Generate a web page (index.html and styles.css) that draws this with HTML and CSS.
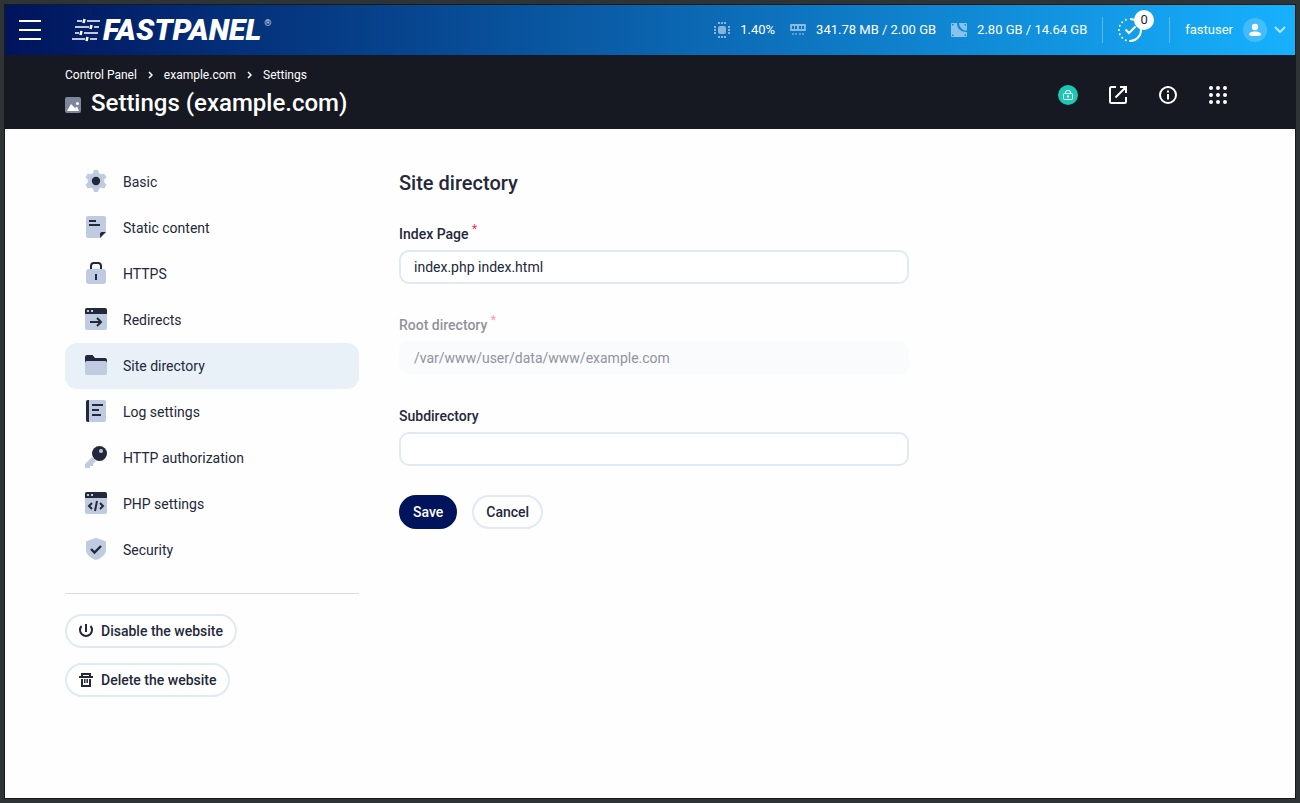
FILE: index.html
```html
<!DOCTYPE html>
<html lang="en">
<head>
<meta charset="utf-8">
<meta name="viewport" content="width=device-width, initial-scale=1">
<title>Settings (example.com)</title>
<link rel="stylesheet" href="styles.css">
</head>
<body>
<div class="window">
  <header class="topbar">
    <button class="icon-button burger" aria-label="Menu">
      <svg width="24" height="20" viewBox="0 0 24 20" stroke="#fff" stroke-width="2"><path d="M1 1h22M1 10h22M1 19h22"/></svg>
    </button>
    <a class="logo" href="#">
      <svg width="29" height="24" viewBox="0 0 29 24" fill="none" stroke="#fff">
        <path stroke-width="1.700" d="M5 3h5M15 3h13M3 9h14M22 9h5M3 15h4M12 15h14M0 21h13M18 21h7"/>
        <path stroke-width="2.600" d="M12.500 1l-1 4M19.500 7l-1 4M9.500 13l-1 4M15.500 19l-1 4"/>
      </svg>
      <span class="logo-name">FASTPANEL</span>
      <span class="logo-mark">®</span>
    </a>
    <div class="stats">
      <span class="stat">
        <svg width="16" height="16" viewBox="0 0 16 16" fill="#fff"><rect x="4" y="4" width="8" height="8" rx="2"/><path d="M4 0h2v2H4zM7 0h2v2H7zM10 0h2v2h-2zM4 14h2v2H4zM7 14h2v2H7zM10 14h2v2h-2zM0 4h2v2H0zM0 7h2v2H0zM0 10h2v2H0zM14 4h2v2h-2zM14 7h2v2h-2zM14 10h2v2h-2z"/></svg>
        1.40%
      </span>
      <span class="stat">
        <svg width="16" height="16" viewBox="0 0 16 16" fill="#fff"><path fill-rule="evenodd" d="M1 2h14q1 0 1 1v2q-1 1 0 2v1q0 1-1 1H1Q0 9 0 8V7q1-1 0-2V3q0-1 1-1zM2 4v3h2V4zM5 4v3h2V4zM9 4v3h2V4zM12 4v3h2V4z"/><path opacity=".6" d="M2 11h2v2H2zM5 11h2v2H5zM9 11h2v2H9zM12 11h2v2h-2z"/></svg>
        341.78 MB / 2.00 GB
      </span>
      <span class="stat">
        <svg width="16" height="16" viewBox="0 0 16 16" fill="#fff"><path fill-rule="evenodd" d="M1 1h5c0 6 4 9 10 9V14q0 1-1 1H1q-1 0-1-1V2q0-1 1-1zM1 2v1.500h1.500V2zM1 12.500V14h1.500v-1.500zM13.500 12.500V14H15v-1.500z"/><path fill-rule="evenodd" d="M8 1h7q1 0 1 1v6.500c-3 0-4-.5-5.500-2C9 5 8 3 8 1zM13.500 2v1.500H15V2z"/></svg>
        2.80 GB / 14.64 GB
      </span>
    </div>
    <button class="icon-button tasks" aria-label="Tasks">
      <svg width="26" height="26" viewBox="0 0 26 26" fill="none" stroke="#fff" stroke-width="2"><path d="M13 2a11 11 0 0 1 0 22"/><path stroke-dasharray="0 4.300" stroke-linecap="round" d="M13 24a11 11 0 0 1 0-22"/><path d="M8.500 12.500l3.500 3.500 6.500-6.500"/></svg>
      <span class="badge">0</span>
    </button>
    <button class="user">
      fastuser
      <svg width="24" height="24" viewBox="0 0 24 24"><circle cx="12" cy="12" r="12" fill="#fff" opacity=".2"/><circle cx="12" cy="9" r="3.200" fill="#fff"/><path fill="#fff" d="M6 16.500c0-2 2.500-3 6-3s6 1 6 3c0 1-2.500 1.500-6 1.500s-6-.5-6-1.500z"/></svg>
      <svg width="12" height="8" viewBox="0 0 12 8" fill="none" stroke="#b5e5ff" stroke-width="2"><path d="M1 1l5 5 5-5"/></svg>
    </button>
  </header>

  <div class="pagebar">
    <div class="page-title">
      <nav class="crumbs" aria-label="Breadcrumb">
        <a href="#">Control Panel</a>
        <svg width="5" height="8" viewBox="0 0 5 8" fill="none" stroke="#fff" stroke-width="1.500"><path d="M1 1l3 3-3 3"/></svg>
        <a href="#">example.com</a>
        <svg width="5" height="8" viewBox="0 0 5 8" fill="none" stroke="#fff" stroke-width="1.500"><path d="M1 1l3 3-3 3"/></svg>
        <span>Settings</span>
      </nav>
      <h1>
        <svg width="16" height="16" viewBox="0 0 16 16"><rect width="16" height="16" rx="2" fill="#7d8799"/><path fill="#fff" d="M2 14l4-7 4 4 2-1.500 2 4.500z"/><circle cx="12.500" cy="6.500" r="1.500" fill="#fff"/></svg>
        Settings (example.com)
      </h1>
    </div>
    <div class="actions">
      <button class="icon-button" aria-label="Secure">
        <svg width="20" height="20" viewBox="0 0 20 20" fill="none" stroke="#fff"><circle cx="10" cy="10" r="10" fill="#1cc7b4" stroke="none"/><rect x="5.500" y="8.500" width="9" height="6" rx="1"/><path d="M7.500 8.500V7q0-1.500 2.500-1.500t2.500 1.500v1.500"/><path d="M9 11.500h2" stroke-width="2"/></svg>
      </button>
      <button class="icon-button" aria-label="Open site">
        <svg width="20" height="20" viewBox="0 0 20 20" fill="none" stroke="#fff" stroke-width="2"><path d="M8 2H3.500Q2 2 2 3.500v13Q2 18 3.500 18h13q1.500 0 1.500-1.500V12M7.500 12.500L18 2M12 2h6v6"/></svg>
      </button>
      <button class="icon-button" aria-label="Information">
        <svg width="20" height="20" viewBox="0 0 20 20" fill="none" stroke="#fff" stroke-width="2"><circle cx="10" cy="10" r="8"/><path d="M10 9v5.500M10 5.500v2"/></svg>
      </button>
      <button class="icon-button" aria-label="Applications">
        <svg width="20" height="20" viewBox="0 0 20 20" fill="none" stroke="#fff" stroke-width="4" stroke-linecap="round"><path d="M3 3h0M10 3h0M17 3h0M3 10h0M10 10h0M17 10h0M3 17h0M10 17h0M17 17h0"/></svg>
      </button>
    </div>
  </div>

  <div class="content">
    <aside class="sidebar">
      <nav class="menu" aria-label="Site settings">
        <a href="#">
          <svg width="24" height="24" viewBox="0 0 24 24"><path fill="#becbe0" d="M10 1h4l1 3.200 2 1.100 3.200-.8 2.300 3.800-2.300 2.500v2.400l2.300 2.500-2.300 3.800-3.200-.8-2 1.100L14 23h-4l-1-3.200-2-1.100-3.200.8-2.300-3.800 2.300-2.500v-2.400L1.500 8.300l2.300-3.800 3.200.8 2-1.100z"/><circle cx="12" cy="12" r="4.200" fill="#23283a"/></svg>
          Basic
        </a>
        <a href="#">
          <svg width="24" height="24" viewBox="0 0 24 24"><path fill="#becbe0" d="M4 1h16q2 0 2 2v14l-6 6H4q-2 0-2-2V3q0-2 2-2z"/><path fill="#23283a" d="M22 17h-4q-2 0-2 2v4z"/><path stroke="#23283a" stroke-width="2" d="M5 6h7M5 10h11"/></svg>
          Static content
        </a>
        <a href="#">
          <svg width="24" height="24" viewBox="0 0 24 24"><path fill="none" stroke="#23283a" stroke-width="2" d="M7 9V5q0-3 3-3h4q3 0 3 3v4"/><rect x="2" y="8" width="20" height="15" rx="3" fill="#becbe0"/><path stroke="#23283a" stroke-width="2" d="M12 13v6"/></svg>
          HTTPS
        </a>
        <a href="#">
          <svg width="24" height="24" viewBox="0 0 24 24"><rect x="1" y="1" width="22" height="22" rx="2" fill="#becbe0"/><path fill="#23283a" d="M3 1h18q2 0 2 2v4H1V3q0-2 2-2z"/><path fill="#becbe0" d="M3 3h2v2H3zM7 3h2v2H7z"/><path fill="none" stroke="#23283a" stroke-width="2" d="M6 15h11M13 11l4 4-4 4"/></svg>
          Redirects
        </a>
        <a href="#" class="current" aria-current="page">
          <svg width="24" height="24" viewBox="0 0 24 24"><path fill="#23283a" d="M3 2h5.500L11 5h10q2 0 2 2v4H1V4q0-2 2-2z"/><rect x="1" y="8" width="22" height="14" rx="2" fill="#becbe0"/></svg>
          Site directory
        </a>
        <a href="#">
          <svg width="24" height="24" viewBox="0 0 24 24"><rect x="2" y="1" width="20" height="22" rx="2" fill="#becbe0"/><path fill="#23283a" d="M4 1h1v22H4q-2 0-2-2V3q0-2 2-2z"/><path stroke="#23283a" stroke-width="2" d="M8 6h11M8 11h7M8 16h9"/></svg>
          Log settings
        </a>
        <a href="#">
          <svg width="24" height="24" viewBox="0 0 24 24"><path fill="#becbe0" d="M8 12l4 4-3 3v2H6v2H1v-4z"/><circle cx="15.500" cy="8.500" r="7.500" fill="#23283a"/><circle cx="17" cy="6" r="2" fill="#becbe0"/></svg>
          HTTP authorization
        </a>
        <a href="#">
          <svg width="24" height="24" viewBox="0 0 24 24"><rect x="1" y="1" width="22" height="22" rx="2" fill="#becbe0"/><path fill="#23283a" d="M3 1h18q2 0 2 2v4H1V3q0-2 2-2z"/><path fill="#becbe0" d="M3 3h2v2H3zM7 3h2v2H7z"/><path fill="none" stroke="#23283a" stroke-width="2" d="M8 12l-3 3 3 3M16 12l3 3-3 3M13 10l-2 10"/></svg>
          PHP settings
        </a>
        <a href="#">
          <svg width="24" height="24" viewBox="0 0 24 24"><path fill="#becbe0" d="M12 1l9 3q1 .4 1 1.500V13c0 4-4 8-10 10C6 21 2 17 2 13V5.500Q2 4.400 3 4z"/><path fill="none" stroke="#23283a" stroke-width="2.400" d="M7 12l3.500 3.500L17 9"/></svg>
          Security
        </a>
      </nav>
      <div class="site-actions">
        <button class="button">
          <svg width="16" height="16" viewBox="0 0 16 16" fill="none" stroke="#23283a" stroke-width="2"><path d="M8 1v8M3.500 3a6 6 0 1 0 9 0"/></svg>
          Disable the website
        </button>
        <button class="button">
          <svg width="16" height="16" viewBox="0 0 16 16" fill="none" stroke="#23283a"><path stroke-width="2" d="M1 5h14M4 5V2h8v3M4 7v7h8V7"/><path stroke-width="1.500" d="M6.800 7v4M9.200 7v4"/></svg>
          Delete the website
        </button>
      </div>
    </aside>

    <form class="settings">
      <h2>Site directory</h2>
      <div class="field">
        <label for="index-page">Index Page <sup>*</sup></label>
        <input id="index-page" type="text" value="index.php index.html">
      </div>
      <div class="field disabled">
        <label for="root-directory">Root directory <sup>*</sup></label>
        <input id="root-directory" type="text" value="/var/www/user/data/www/example.com" disabled>
      </div>
      <div class="field">
        <label for="subdirectory">Subdirectory</label>
        <input id="subdirectory" type="text">
      </div>
      <div class="form-actions">
        <button type="button" class="button primary">Save</button>
        <button type="button" class="button">Cancel</button>
      </div>
    </form>
  </div>
</div>
</body>
</html>
```
FILE: styles.css
```css
* {
  box-sizing: border-box;
}

body {
  display: flex;
  min-height: 100vh;
  margin: 0;
  padding: 4px;
  background: #2e3436;
  color: #23283a;
  font: 14px/20px Roboto, "Liberation Sans", sans-serif;
}

.window {
  flex: 1;
  min-width: 0;
  border: 1px solid #171a1c;
  background: #fefefe;
}

a {
  color: inherit;
  text-decoration: none;
}

button,
input {
  color: inherit;
  font: inherit;
}

button {
  cursor: pointer;
}

svg {
  display: block;
  flex: none;
}

.icon-button {
  padding: 0;
  border: 0;
  background: none;
}

.topbar {
  display: flex;
  align-items: center;
  height: 50px;
  padding: 0 9px 0 13px;
  background: linear-gradient(90deg, #00145c, #16b1fe);
  color: #fff;
}

.logo {
  display: flex;
  align-items: center;
  margin-left: 30px;
}

.logo-name {
  margin-left: 2px;
  font-size: 30px;
  font-style: italic;
  font-weight: 900;
  line-height: 30px;
}

.logo-mark {
  align-self: flex-start;
  margin-left: 3px;
  font-size: 9px;
  line-height: 16px;
  opacity: .8;
}

.stats {
  display: flex;
  gap: 15px;
  margin-left: auto;
  font-size: 13px;
}

.stat {
  display: flex;
  align-items: center;
  gap: 10px;
  white-space: nowrap;
}

.stat svg {
  opacity: .5;
}

.tasks {
  position: relative;
  margin-left: 15px;
  padding: 0 26px 0 14px;
  border: solid rgba(255, 255, 255, .3);
  border-width: 0 1px;
}

.badge {
  position: absolute;
  top: -7px;
  right: 15px;
  width: 20px;
  border-radius: 10px;
  background: #fff;
  color: #23283a;
  font-size: 13px;
}

.user {
  display: flex;
  align-items: center;
  gap: 10px;
  padding: 0 0 0 15px;
  border: 0;
  background: none;
  font-size: 13px;
}

.user svg + svg {
  margin-left: -3px;
}

.pagebar {
  display: flex;
  align-items: center;
  justify-content: space-between;
  padding: 10px 67px 10px 60px;
  background: #161922;
  color: #fff;
}

.crumbs {
  display: flex;
  align-items: center;
  gap: 11px;
  font-size: 12px;
}

h1,
h2 {
  margin: 0;
  font-weight: 500;
}

h1 {
  display: flex;
  align-items: center;
  gap: 10px;
  padding-top: 2px;
  font-size: 24px;
  line-height: 32px;
}

h1 svg {
  margin-top: 4px;
}

.actions {
  display: flex;
  gap: 30px;
  padding-top: 6px;
}

.content {
  display: flex;
  gap: 40px;
  padding: 30px 60px;
}

.sidebar {
  width: 294px;
}

.menu {
  padding-bottom: 20px;
  border-bottom: 1px solid #d3deea;
}

.menu a {
  display: flex;
  align-items: center;
  gap: 15px;
  height: 46px;
  padding: 0 19px;
  border-radius: 12px;
}

.menu svg {
  margin-bottom: 2px;
}

.menu .current {
  background: #e8f0f8;
}

.site-actions {
  display: flex;
  flex-direction: column;
  align-items: flex-start;
  gap: 15px;
  padding-top: 20px;
}

.button {
  display: flex;
  align-items: center;
  gap: 7px;
  height: 34px;
  padding: 0 12px;
  border: 2px solid #e0eaf4;
  border-radius: 17px;
  background: #fff;
  font-weight: 500;
}

.site-actions .button {
  padding-left: 11px;
}

.button.primary {
  border-color: #00145c;
  background: #00145c;
  color: #fff;
}

.settings {
  flex: 0 1 510px;
}

h2 {
  margin-bottom: 15px;
  font-size: 20px;
  line-height: 48px;
}

.field {
  margin-bottom: 29px;
}

.field label {
  display: block;
  margin-bottom: 4px;
  font-weight: 500;
  line-height: 24px;
}

.field sup {
  color: #ff2850;
  font-size: 12px;
  font-weight: 400;
  line-height: 0;
}

.field.disabled label {
  opacity: .5;
}

.field input {
  display: block;
  width: 100%;
  height: 34px;
  padding: 0 13px;
  border: 2px solid #e0eaf4;
  border-radius: 10px;
  background: #fff;
}

.field input:disabled {
  border-color: #fafbfc;
  background: #fafbfc;
  color: #90939c;
}

.form-actions {
  display: flex;
  gap: 15px;
}
```
